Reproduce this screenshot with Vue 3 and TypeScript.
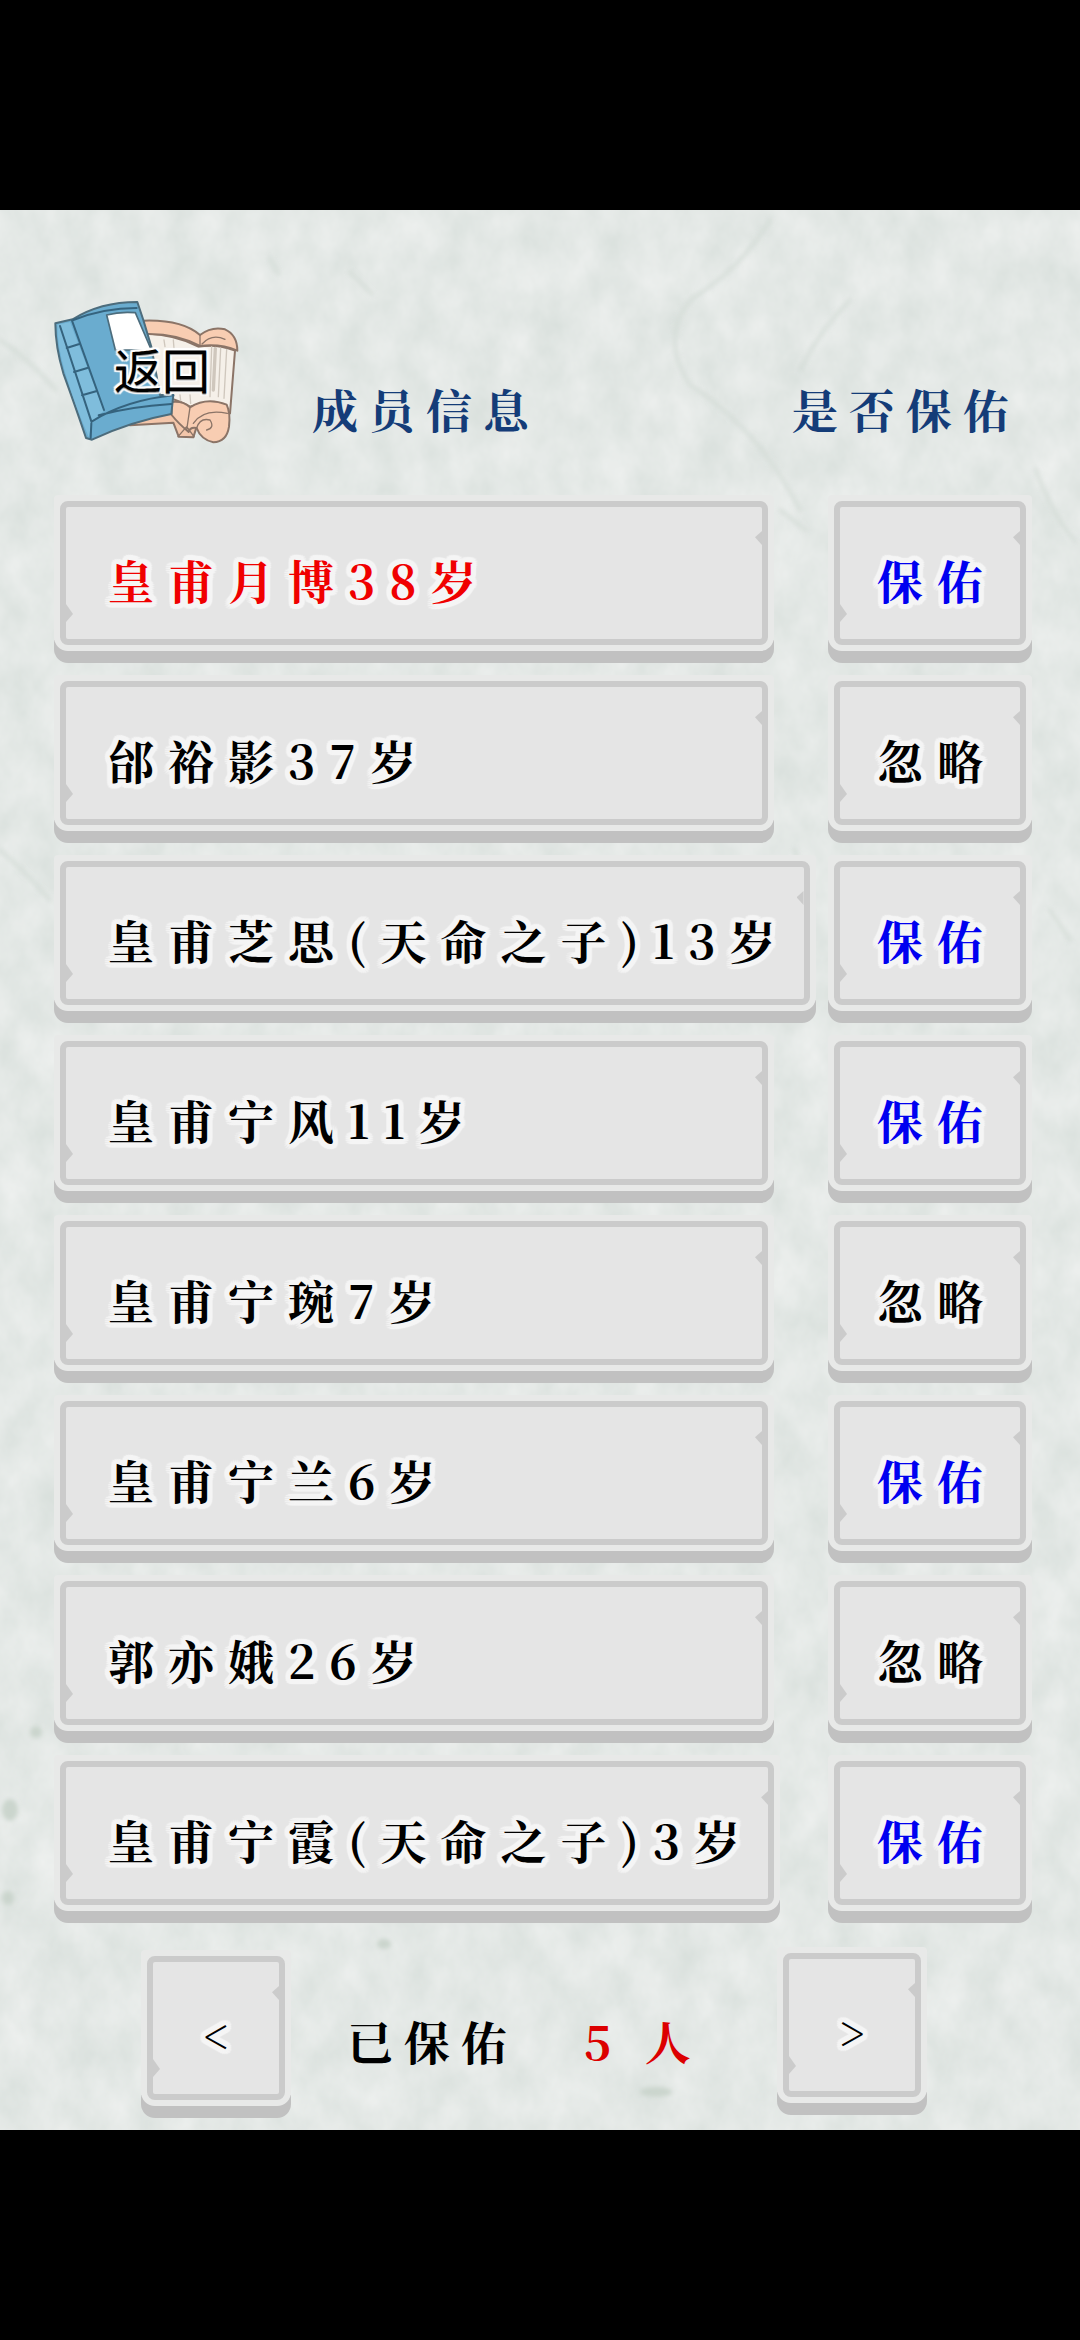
<script setup lang="ts">
interface Member {
  name: string
  blessed: boolean
  current?: boolean
}

const members: Member[] = [
  { name: '皇甫月博38岁', blessed: true, current: true },
  { name: '邰裕影37岁', blessed: false },
  { name: '皇甫芝思(天命之子)13岁', blessed: true },
  { name: '皇甫宁风11岁', blessed: true },
  { name: '皇甫宁琬7岁', blessed: false },
  { name: '皇甫宁兰6岁', blessed: true },
  { name: '郭亦娥26岁', blessed: false },
  { name: '皇甫宁霞(天命之子)3岁', blessed: true },
]

const blessedCount = members.filter((m) => m.blessed).length
</script>

<template>
  <div class="page">
    <main class="stage">
      <svg class="paper" viewBox="0 0 1080 1920" preserveAspectRatio="none" aria-hidden="true">
        <filter id="clouds" x="0" y="0" width="100%" height="100%" color-interpolation-filters="sRGB">
          <feTurbulence type="fractalNoise" baseFrequency="0.03 0.022" numOctaves="4" seed="21" />
          <feColorMatrix values="0.09 0 0 0 0.848  0.07 0 0 0 0.876  0.08 0 0 0 0.861  0 0 0 0 1" />
        </filter>
        <filter id="soft"><feGaussianBlur stdDeviation="2" /></filter>
        <rect width="1080" height="1920" filter="url(#clouds)" />
        <g fill="none" stroke="#d3dbd6" stroke-width="4" stroke-linecap="round" opacity="0.7" filter="url(#soft)">
          <path d="M770 10 Q740 60 690 90 Q660 130 690 175 Q760 220 800 300" />
          <path d="M270 48 L278 64 M350 62 L372 84 M850 90 Q820 120 800 160" />
          <path d="M0 130 Q30 150 56 180 M0 640 Q24 660 50 690 M780 300 L806 320" />
          <path d="M1036 260 Q1050 300 1074 330 M1050 700 L1070 730 M795 640 L810 700" />
        </g>
        <g fill="#cbd5cd" filter="url(#soft)">
          <ellipse cx="10" cy="1600" rx="8" ry="11" />
          <ellipse cx="36" cy="1522" rx="6" ry="6" />
          <ellipse cx="8" cy="1688" rx="6" ry="7" />
          <ellipse cx="384" cy="1734" rx="7" ry="5" />
          <ellipse cx="656" cy="1882" rx="16" ry="5" />
        </g>
      </svg>

      <header class="head">
        <button type="button" class="back">
          <svg class="books" viewBox="0 0 780 570" aria-hidden="true" stroke-linejoin="round" stroke-linecap="round">
            <g stroke="#8b7467" stroke-width="6">
              <path fill="#f3c6aa" d="M300 436 L430 428 L446 470 L490 472 L500 440 L440 370 L380 380 Z" />
              <path fill="#f5f0e9" d="M345 160 Q440 165 505 200 Q560 190 615 212 L600 400 Q540 360 480 380 Q430 350 380 350 Z" />
              <path fill="#f8cdb2" d="M340 122 Q455 118 510 165 Q545 138 585 148 Q622 165 622 212 Q570 190 510 198 Q440 160 348 162 Z" />
              <path fill="#f8cdb2" d="M425 366 Q460 362 480 382 Q530 350 590 374 Q602 400 597 440 Q590 486 550 487 Q512 478 500 444 Q480 440 476 456 Q445 430 425 405 Z" />
            </g>
            <g fill="none" stroke="#8b7467" stroke-width="4">
              <path d="M510 165 L510 198 M516 192 Q545 160 585 178 M480 382 L470 450 M490 430 Q520 385 592 400 M500 444 Q510 412 540 420 Q555 444 530 450 M444 470 L470 440 L492 470" />
              <path stroke="#cfc7bd" d="M402 180 L405 200 M430 180 L432 205 M545 200 L540 350 M572 204 L565 350 M590 208 L582 355 M450 345 L452 362 M480 345 L482 370" />
              <path stroke="#cfc7bd" stroke-width="10" d="M556 205 L550 330" />
            </g>
            <path fill="#6aaccf" stroke="#4c6c7c" stroke-width="6" d="M76 130 L128 118 Q210 66 322 66 L340 120 L364 200 L390 345 L430 345 L424 402 Q300 425 186 479 L168 474 Q140 390 100 280 Q76 200 76 130 Z" />
            <path fill="#7fbddc" d="M82 134 L120 126 L222 392 L186 425 L176 470 Q140 390 106 280 Q82 200 82 134 Z" />
            <path fill="#ffffff" stroke="#4c6c7c" stroke-width="5" d="M230 105 Q270 94 316 98 L364 210 L256 210 Z" />
            <g fill="none" stroke="#35637e" stroke-width="6">
              <path d="M126 122 L222 390 M90 138 L184 424 M110 204 L148 192 M132 276 L172 264 M156 346 L198 334 M186 424 Q290 360 430 346 M206 406 Q300 380 424 372 M184 430 L182 474" />
              <path d="M130 120 Q220 84 320 84" />
            </g>
          </svg>
          <span class="back-label">返回</span>
        </button>
        <h1 class="caption">成员信息</h1>
        <h2 class="caption caption-end">是否保佑</h2>
      </header>

      <ul class="list">
        <li v-for="m in members" :key="m.name" class="row">
          <button type="button" class="plate name" :class="{ current: m.current }">
            <span class="face"><span class="inner">{{ m.name }}</span></span>
          </button>
          <button type="button" class="plate status" :class="{ blessed: m.blessed }">
            <span class="face"><span class="inner">{{ m.blessed ? '保佑' : '忽略' }}</span></span>
          </button>
        </li>
      </ul>

      <footer class="foot">
        <button type="button" class="plate pager prev" aria-label="上一页">
          <span class="face"><span class="inner">&lt;</span></span>
        </button>
        <p class="summary">
          <span>已保佑</span>
          <strong class="count">{{ blessedCount }} 人</strong>
        </p>
        <button type="button" class="plate pager" aria-label="下一页">
          <span class="face"><span class="inner">&gt;</span></span>
        </button>
      </footer>
    </main>
  </div>
</template>

<style>
body {
  background: #000;
}
</style>

<style scoped>
.page {
  min-height: 100vh;
  display: flex;
  flex-direction: column;
  justify-content: center;
  background: #000;
  font-family: 'Noto Serif CJK SC', 'Noto Serif SC', 'Source Han Serif SC', 'Liberation Serif', 'Noto Sans CJK SC', serif;
  font-weight: 700;
  font-size: 46px;
  line-height: 60px;
  color: #000;
}

.stage {
  position: relative;
  box-sizing: border-box;
  padding: 0 48px 12px 54px;
  background: #e4e9e6;
  isolation: isolate;
}

.paper {
  position: absolute;
  inset: 0;
  width: 100%;
  height: 100%;
  z-index: -1;
}

button {
  margin: 0;
  padding: 0;
  border: 0;
  background: none;
  font: inherit;
  color: inherit;
  cursor: pointer;
}

.head {
  display: flex;
  align-items: flex-end;
  box-sizing: border-box;
  height: 285px;
  padding-bottom: 48px;
}

.back {
  position: relative;
  width: 190px;
  height: 148px;
  margin-right: 68px;
}

.books {
  position: absolute;
  left: -24px;
  top: -19px;
  width: 260px;
  height: 190px;
}

.back-label {
  position: absolute;
  left: 60px;
  top: 39px;
  font-family: 'Noto Sans CJK SC', sans-serif;
  font-weight: 400;
  font-size: 48px;
  text-shadow: 0 1px 1px #888, 2px 0 1px #fff, -2px 0 1px #fff, 0 2px 1px #fff, 0 -2px 1px #fff,
    2px 2px 1px #fff, -2px 2px 1px #fff, 2px -2px 1px #fff, -2px -2px 1px #fff;
}

.caption {
  margin: 0 0 9px;
  font-size: 46px;
  font-weight: inherit;
  letter-spacing: 11px;
  color: #143c78;
}

.caption-end {
  margin-left: auto;
  padding-right: 12px;
}

.list {
  display: flex;
  flex-direction: column;
  gap: 12px;
  margin: 0;
  padding: 0;
  list-style: none;
}

.row {
  display: flex;
  justify-content: space-between;
}

.plate {
  display: flex;
  height: 168px;
  border-radius: 0 0 14px 14px;
  background: linear-gradient(transparent 145px, #c1c1c1 145px);
  letter-spacing: 14px;
  font-variant-numeric: tabular-nums;
  text-shadow: 5px 0 1px #f5f5f5, -5px 0 1px #f5f5f5, 0 5px 1px #f5f5f5, 0 -5px 1px #f5f5f5,
    4px 4px 1px #f5f5f5, -4px 4px 1px #f5f5f5, 4px -4px 1px #f5f5f5, -4px -4px 1px #f5f5f5,
    5px 2px 1px #f5f5f5, -5px 2px 1px #f5f5f5, 5px -2px 1px #f5f5f5, -5px -2px 1px #f5f5f5,
    2px 5px 1px #f5f5f5, -2px 5px 1px #f5f5f5, 2px -5px 1px #f5f5f5, -2px -5px 1px #f5f5f5,
    3px 0 1px #f5f5f5, -3px 0 1px #f5f5f5, 0 3px 1px #f5f5f5, 0 -3px 1px #f5f5f5,
    2px 2px 1px #f5f5f5, -2px -2px 1px #f5f5f5, 2px -2px 1px #f5f5f5, -2px 2px 1px #f5f5f5;
}

.face {
  flex: 1;
  display: flex;
  box-sizing: border-box;
  height: 156px;
  padding: 6px;
  border-radius: 4px 4px 14px 14px;
  background: #e8e9e8;
}

.inner {
  position: relative;
  flex: 1;
  display: flex;
  align-items: center;
  justify-content: center;
  box-sizing: border-box;
  padding-top: 12px;
  border: 6px solid #cbcbcb;
  border-radius: 8px;
  background: #e5e5e5;
  white-space: nowrap;
}

.inner::before,
.inner::after {
  content: '';
  position: absolute;
  width: 7px;
  background: #cbcbcb;
}

.inner::before {
  left: 0;
  bottom: 17px;
  height: 18px;
  clip-path: polygon(0 0, 100% 55%, 0 100%);
}

.inner::after {
  right: 0;
  top: 24px;
  height: 14px;
  clip-path: polygon(100% 0, 0 45%, 100% 100%);
}

.name {
  min-width: 720px;
}

.name .inner {
  justify-content: flex-start;
  padding-left: 42px;
  padding-right: 14px;
}

.current {
  color: #f00000;
}

.status {
  width: 204px;
}

.status .inner {
  padding-left: 14px;
}

.blessed {
  color: #0000f0;
}

.foot {
  display: flex;
  align-items: flex-start;
  height: 171px;
  margin-top: 24px;
  padding: 0 105px 0 87px;
}

.pager {
  width: 150px;
  letter-spacing: 0;
  font-weight: 400;
}

.prev {
  align-self: flex-end;
}

.summary {
  flex: 1;
  display: flex;
  gap: 66px;
  margin: 0;
  padding: 63px 0 0 56px;
  letter-spacing: 11px;
}

.count {
  font-weight: inherit;
  color: #dc0000;
}
</style>
